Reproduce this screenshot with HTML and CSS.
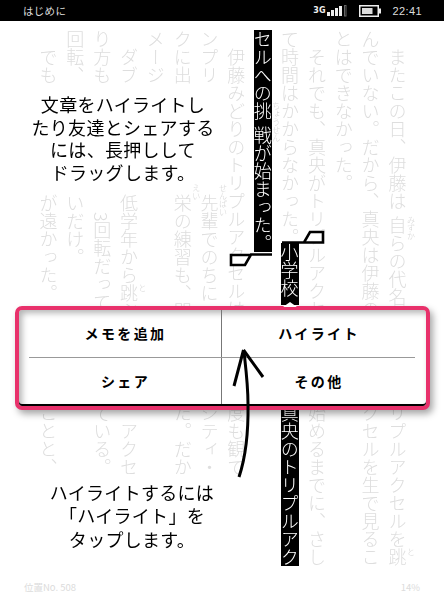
FILE: index.html
```html
<!DOCTYPE html>
<html lang="ja">
<head>
<meta charset="utf-8">
<title>はじめに</title>
<link rel="stylesheet" href="styles.css">
</head>
<body>
<div class="device">
  <header class="status">
    <span class="status-title">はじめに</span>
    <div class="status-right">
      <span class="net">3G</span>
      <svg class="signal" width="20" height="12" viewBox="0 0 20 12"><rect x="0" y="7" width="3" height="4" fill="#eee"/><rect x="4" y="5" width="3" height="6" fill="#eee"/><rect x="8" y="3" width="3" height="8" fill="#eee"/><rect x="12" y="1" width="3" height="10" fill="#eee"/><rect x="17.5" y="0.5" width="1.5" height="10.5" fill="none" stroke="#666" stroke-width="1"/></svg>
      <svg class="battery" width="22" height="12" viewBox="0 0 22 12"><rect x="0.75" y="0.75" width="18.5" height="10.5" fill="none" stroke="#eee" stroke-width="1.5"/><rect x="3" y="3" width="10.5" height="6" fill="#ddd"/><rect x="20" y="3.5" width="2" height="5" fill="#eee"/></svg>
      <span class="time">22:41</span>
    </div>
  </header>

  <main class="page">
    <div class="col"><p class="seg span2 indent">またこの日、伊藤<span class="gap">は</span><span class="base">自<span class="rt">みずか</span></span>らの代名</p><p class="seg low">リプルアクセルを<span class="base">跳<span class="rt">と</span></span></p></div>
    <div class="col"><p class="seg span2">んでいない。だから、真央は伊藤の</p><p class="seg low">クセルを生で見るこ</p></div>
    <div class="col"><p class="seg span2">とはできなかった。</p></div>
    <div class="col"><p class="seg span2 indent">それでも、真央がトリプルアクセル</p><p class="seg low">始めるまでに、さし</p></div>
    <div class="col">
      <div class="stack">
        <p class="plain">て時間はかからなかった。</p>
        <p class="sel sel-b">小学校</p>
      </div>
      <p class="seg low"><span class="sel">真央のトリプルアク</span></p>
    </div>
    <div class="col"><p class="seg span2"><span class="sel">セルへの<span class="gap"><span class="base">挑<span class="rt">ちょうせん</span></span></span>戦が始まった。</span></p></div>
    <div class="col"><p class="seg span2 indent">伊藤みどりのトリプルアクセルは</p><p class="seg low">度も観て</p></div>
    <div class="col"><p class="seg">ンプリ</p><p class="seg"><span class="base">先<span class="rt rt-up">せんぱい</span></span>輩でのちに</p><p class="seg low">シティ・</p></div>
    <div class="col"><p class="seg">クに出</p><p class="seg"><span class="base">栄<span class="rt rt-up">えい</span></span>の練習も、間</p><p class="seg low">た。だか</p></div>
    <div class="col"><p class="seg">メージ</p></div>
    <div class="col"><p class="seg indent">ダブ</p><p class="seg">低学年から<span class="base">跳<span class="rt">と</span></span>ぶ</p><p class="seg low indent">アクセ</p></div>
    <div class="col"><p class="seg">り方も</p><p class="seg indent">3回転だって</p><p class="seg low">ている。</p></div>
    <div class="col"><p class="seg">回転、</p><p class="seg">いだけ。</p></div>
    <div class="col"><p class="seg indent">でも</p><p class="seg">が遠かった。</p><p class="seg low">ことと、</p></div>
  </main>

  <footer class="foot">
    <span>位置No. 508</span>
    <span>14%</span>
  </footer>

  <div class="note note-top">文章をハイライトし<br>たり友達とシェアする<br>には、長押しして<br>ドラッグします。</div>

  <svg class="handles" width="444" height="600" viewBox="0 0 444 600">
    <path d="M272 254.5H251L245 265H231V255H251" fill="#fff" stroke="#000" stroke-width="2.6"/>
    <path d="M282 242.5H304L310 232H323V242.5H304" fill="#fff" stroke="#000" stroke-width="2.6"/>
  </svg>

  <div class="tail"></div>

  <section class="menu">
    <button class="cell cell-l">メモを追加</button>
    <button class="cell cell-r">ハイライト</button>
    <div class="rule"></div>
    <button class="cell cell-l">シェア</button>
    <button class="cell cell-r">その他</button>
  </section>

  <svg class="arrow" width="444" height="600" viewBox="0 0 444 600">
    <path d="M243.5 350L234 386M243.5 350L263 377" fill="none" stroke="#000" stroke-width="3"/>
    <path d="M244 352C246 370 248 385 248 404C248.5 435 246 456 239 477" fill="none" stroke="#000" stroke-width="3"/>
  </svg>

  <div class="note note-bottom">ハイライトするには<br>「ハイライト」を<br>タップします。</div>
</div>
</body>
</html>
```
FILE: styles.css
```css
* { box-sizing: border-box; }
html, body { margin: 0; padding: 0; background: #fff; }
body { font-family: "Noto Sans CJK JP", "Noto Sans", sans-serif; }

.device {
  position: relative;
  width: 444px;
  height: 600px;
  overflow: hidden;
  background: #fff;
}

.status {
  display: flex;
  align-items: center;
  justify-content: space-between;
  height: 21px;
  padding: 0 22px 0 23px;
  background: #000;
  color: #ddd;
}
.status-title { font-size: 10.5px; line-height: 21px; letter-spacing: .3px; }
.status-right { display: flex; align-items: center; }
.net { font-family: "DejaVu Sans", sans-serif; font-size: 8px; font-weight: 700; color: #eee; margin-right: 2px; }
.signal { margin-right: 12px; }
.battery { margin-right: 11px; }
.time { font-family: "Liberation Sans", sans-serif; font-size: 11px; letter-spacing: .4px; color: #ddd; }

.page {
  display: flex;
  flex-direction: row-reverse;
  height: 548px;
  padding: 9px 33.6px 0 0;
  filter: grayscale(1);
}
.col {
  display: grid;
  grid-template-rows: 164px 210px 1fr;
  flex: 0 0 26.85px;
  width: 26.85px;
  height: 539px;
}
.seg, .plain {
  margin: 0;
  writing-mode: vertical-rl;
  font-size: 18px;
  font-weight: 300;
  line-height: 26.85px;
  color: #dedede;
  white-space: nowrap;
}
.seg.span2, .stack { grid-row: 1 / 3; }
.seg.low { grid-row: 3; }
.indent { text-indent: 18px; }
.gap { letter-spacing: 6px; }

.sel {
  display: block;
  width: 18px;
  height: fit-content;
  margin: 0 auto;
  background: #000;
  color: #fff;
  writing-mode: vertical-rl;
  font-size: 18px;
  font-weight: 300;
  line-height: 18px;
}
.seg .sel { margin: 0 4.4px 0 0; }
.sel-b { height: 62px; margin-top: -3px; }

.base { position: relative; }
.rt {
  position: absolute;
  left: 50%;
  top: 0;
  margin-left: 9px;
  width: 9px;
  font-size: 8px;
  line-height: 9px;
  letter-spacing: 0;
  text-indent: 0;
  color: #d4d4d4;
}
.rt-up { top: -10px; }

.foot {
  display: flex;
  justify-content: space-between;
  padding: 9px 24px 0;
  font-size: 9.5px;
  line-height: 18px;
  color: #dcdcdc;
}

.note {
  position: absolute;
  color: #000;
  text-align: center;
  font-size: 18px;
  letter-spacing: .3px;
  white-space: nowrap;
  filter: grayscale(1);
}
.note-top { left: 23px; top: 93px; width: 200px; line-height: 22.6px; }
.note-bottom { left: 32px; top: 481px; width: 200px; line-height: 23.4px; }

.handles { position: absolute; left: 0; top: 0; }
.arrow { position: absolute; left: 0; top: 0; }

.menu {
  position: absolute;
  left: 15px;
  top: 306px;
  width: 415px;
  height: 104px;
  display: grid;
  grid-template-columns: 203px 1fr;
  grid-template-rows: 46.5px 1px 46.5px;
  background: #fff;
  border: 4px solid #e8316b;
  border-radius: 7px;
  box-shadow: 3px 4px 7px rgba(0,0,0,.35), inset 3px 3px 6px rgba(0,0,0,.3), inset 0 -2px 0 #000;
}
.cell {
  padding: 0;
  border: 0;
  background: none;
  font-family: inherit;
  font-size: 14px;
  font-weight: 700;
  letter-spacing: 2.4px;
  color: #000;
}
.cell-l { padding-left: 11px; border-right: 1px solid #777; }
.cell-r { padding-right: 10px; }
.rule { grid-column: 1 / 3; height: 1px; margin: 0 11px 0 10px; background: #999; }

.tail {
  position: absolute;
  left: 283px;
  top: 302px;
  width: 0;
  height: 0;
  border-left: 7px solid transparent;
  border-right: 7px solid transparent;
  border-bottom: 5px solid #fff;
  z-index: 1;
}
```
